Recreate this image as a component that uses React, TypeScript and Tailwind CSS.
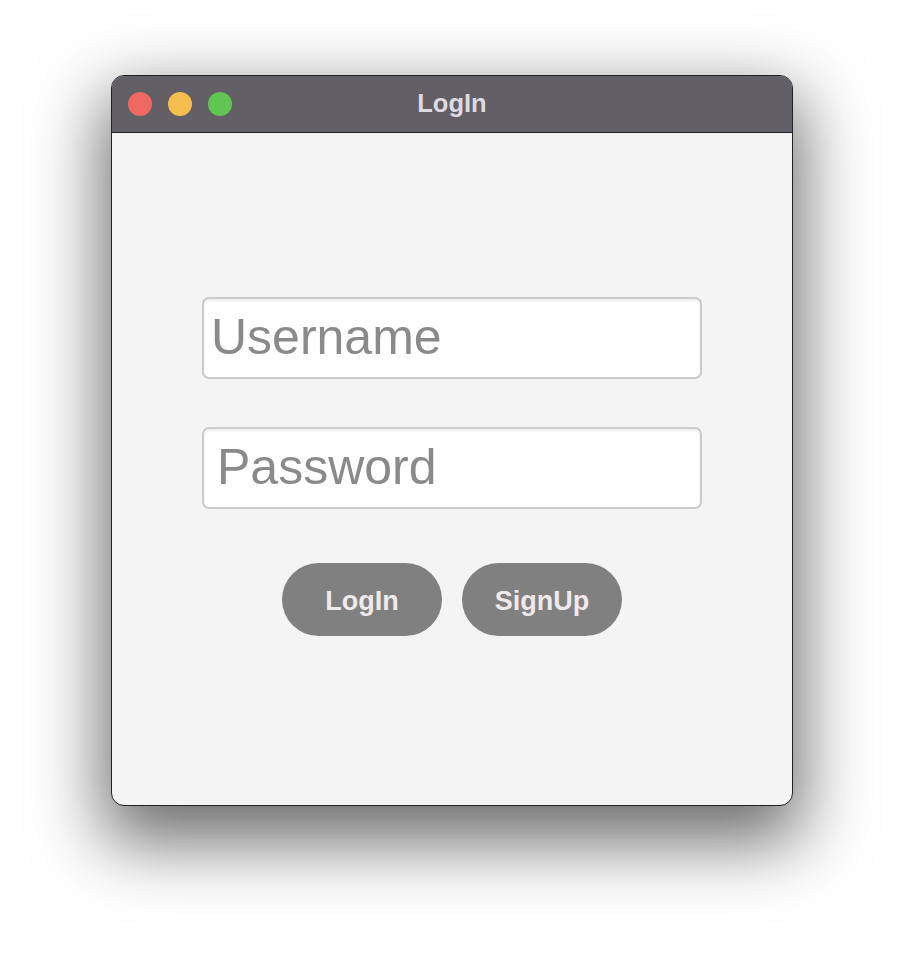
import React from "react";

export default function App() {
  const font = { fontFamily: '"Liberation Sans", Arial, sans-serif' };
  return (
    <div className="w-[904px] h-[954px] bg-white pt-[75px] pl-[111px]" style={font}>
      <div className="w-[682px] h-[731px] rounded-[13px] border border-[#222] bg-[#f4f4f4] overflow-hidden shadow-[0_28px_70px_8px_rgba(0,0,0,0.58)] flex flex-col">
        <div className="relative h-[57px] shrink-0 bg-[#625f66] border-b border-[#222] flex items-center">
          <div className="flex items-center gap-[16px] pl-[16px]">
            <div className="w-[24px] h-[24px] rounded-full bg-[#ee6a5e]" />
            <div className="w-[24px] h-[24px] rounded-full bg-[#f6be4f]" />
            <div className="w-[24px] h-[24px] rounded-full bg-[#61c554]" />
          </div>
          <div className="absolute inset-0 flex items-center justify-center pb-[1px]">
            <span className="text-[25.5px] font-bold text-[#dedae1] leading-none">LogIn</span>
          </div>
        </div>
        <div className="flex flex-col items-center pt-[164px]">
          <input
            placeholder="Username"
            className="w-[500px] h-[82px] rounded-[7px] border-2 border-[#cbcbcb] bg-white pl-[7px] pb-[3px] text-[50px] text-[#8a8a8a] placeholder:text-[#8a8a8a] outline-none shadow-[inset_0_2px_3px_rgba(0,0,0,0.07)]"
            style={font}
          />
          <input
            placeholder="Password"
            className="mt-[48px] w-[500px] h-[82px] rounded-[7px] border-2 border-[#cbcbcb] bg-white pl-[13px] pb-[3px] text-[50px] text-[#8a8a8a] placeholder:text-[#8a8a8a] outline-none shadow-[inset_0_2px_3px_rgba(0,0,0,0.07)]"
            style={font}
          />
          <div className="mt-[54px] flex gap-[20px]">
            <button className="w-[160px] h-[73px] rounded-full bg-[#808080] pt-[3px] text-[27px] font-bold text-[#efe9ec]" style={font}>
              LogIn
            </button>
            <button className="w-[160px] h-[73px] rounded-full bg-[#808080] pt-[3px] text-[27px] font-bold text-[#efe9ec]" style={font}>
              SignUp
            </button>
          </div>
        </div>
      </div>
    </div>
  );
}
